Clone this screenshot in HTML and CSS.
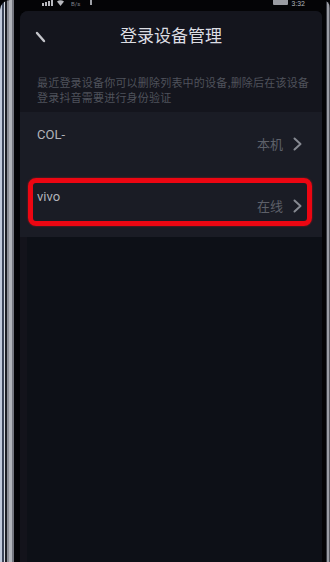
FILE: index.html
```html
<!DOCTYPE html>
<html lang="zh-CN">
<head>
<meta charset="utf-8">
<title>登录设备管理</title>
<link rel="stylesheet" href="styles.css">
</head>
<body>
<div class="bezel-left"></div>
<div class="screen">
  <div class="statusbar">
    <div class="sb-left">
      <svg class="sig" width="11" height="6" viewBox="0 0 11 6"><rect x="0" y="3" width="2" height="3"/><rect x="3" y="2" width="2" height="4"/><rect x="6" y="1" width="2" height="5"/><rect x="9" y="0" width="2" height="6"/></svg>
      <svg class="wifi" width="7" height="6" viewBox="0 0 7 6"><path d="M0 1.5 Q3.5 -1 7 1.5 L3.5 6 Z"/></svg>
      <span class="speed">B/s</span>
      <span class="dot"></span>
    </div>
    <div class="sb-right">
      <span class="battery"></span>
      <span class="time">3:32</span>
    </div>
  </div>
  <div class="app">
    <div class="header">
      <svg class="back" width="12" height="14" viewBox="0 0 12 14"><line x1="2" y1="2" x2="9" y2="10" stroke-width="2.4" stroke-linecap="round"/></svg>
      <h1 class="title">登录设备管理</h1>
      <span></span>
    </div>
    <p class="desc">最近登录设备你可以删除列表中的设备,删除后在该设备<br>登录抖音需要进行身份验证</p>
    <div class="list">
      <div class="row">
        <span class="name">COL-</span>
        <span class="status">本机<svg class="chev" width="9" height="14" viewBox="0 0 9 14"><polyline points="1.5,1.5 7.5,7 1.5,12.5"/></svg></span>
      </div>
      <div class="row row-2">
        <span class="name">vivo</span>
        <span class="status">在线<svg class="chev" width="9" height="14" viewBox="0 0 9 14"><polyline points="1.5,1.5 7.5,7 1.5,12.5"/></svg></span>
        <span class="highlight"></span>
      </div>
    </div>
    <div class="filler"></div>
  </div>
</div>
<div class="bezel-right"></div>
</body>
</html>
```
FILE: styles.css
```css
html, body {
  margin: 0;
  padding: 0;
}
body {
  width: 330px;
  height: 562px;
  overflow: hidden;
  display: flex;
  background: #030305;
  font-family: "Noto Sans CJK SC", "Noto Sans", sans-serif;
}
.bezel-left {
  width: 20px;
  flex: none;
  background: linear-gradient(to right,
    #c2cbdd 0 2px, #3c465a 2px 4px, #d6dae2 4px 5px, #1c1e24 5px 7px,
    #8c8e96 7px 9px, #b2b4ba 9px 12px, #74767e 12px 14px, #040406 14px 20px);
  border-top-left-radius: 10px;
}
.bezel-right {
  width: 8px;
  flex: none;
  background: linear-gradient(to right,
    #040406 0 4px, #3a3c42 4px 5px, #9a9ca4 5px 7px, #55575f 7px 8px);
  border-top-right-radius: 10px;
}
.screen {
  width: 302px;
  flex: none;
  display: flex;
  flex-direction: column;
}
.statusbar {
  height: 11px;
  flex: none;
  background: #040406;
  display: flex;
  justify-content: space-between;
  align-items: flex-start;
  padding: 0 17px 0 22px;
}
.sb-left, .sb-right {
  display: flex;
  align-items: flex-start;
  gap: 4px;
}
.sig, .wifi { fill: #b8b9be; }
.speed {
  font-family: "Roboto", sans-serif;
  font-size: 6px;
  line-height: 7px;
  color: #80828a;
  margin-left: 3px;
}
.dot {
  width: 2px;
  height: 5px;
  background: #a0a2a8;
  margin-left: 6px;
}
.battery {
  width: 15px;
  height: 5px;
  background: #9a9ca2;
  border-radius: 0 0 1px 1px;
}
.time {
  font-family: "Roboto", sans-serif;
  font-size: 7px;
  line-height: 8px;
  color: #b0b2b8;
}
.app {
  flex: 1;
  display: flex;
  flex-direction: column;
  background: #0d1017;
  border-radius: 8px 6px 0 0;
  overflow: hidden;
}
.header {
  height: 50px;
  flex: none;
  background: #14151d;
  display: grid;
  grid-template-columns: 1fr auto 1fr;
  align-items: start;
}
.back {
  stroke: #c4c5ca;
  margin: 20px 0 0 15px;
}
.title {
  margin: 12px 0 0;
  font-size: 17px;
  line-height: 24px;
  font-weight: 400;
  color: #dcdde2;
}
.desc {
  margin: 0;
  background: #14151d;
  padding: 14px 0 7px 17px;
  font-size: 11px;
  line-height: 15px;
  letter-spacing: 0.2px;
  color: #4f525b;
  white-space: nowrap;
}
.list {
  background: #1a1c25;
  flex: none;
}
.row {
  height: 62px;
  position: relative;
  display: flex;
  justify-content: space-between;
  align-items: flex-start;
  padding: 0 20px 0 17px;
}
.row-2 { height: 63px; }
.name {
  margin-top: 16px;
  font-family: "Roboto", "Noto Sans", sans-serif;
  font-size: 13px;
  line-height: 14px;
  color: #b2b4ba;
}
.status {
  margin-top: 24px;
  display: flex;
  align-items: center;
  gap: 10px;
  font-size: 13px;
  line-height: 16px;
  color: #5d6069;
}
.chev {
  fill: none;
  stroke: #868991;
  stroke-width: 2;
  stroke-linecap: round;
  stroke-linejoin: round;
}
.highlight {
  position: absolute;
  left: 8px;
  right: 10px;
  top: 4px;
  bottom: 11px;
  border: 5px solid #ec0612;
  border-radius: 8px;
  box-shadow: 0 0 2px rgba(255, 20, 20, 0.6);
}
.filler {
  flex: 1;
  background: linear-gradient(to right, #13131b 0 7px, #0d1017 7px);
}
```
